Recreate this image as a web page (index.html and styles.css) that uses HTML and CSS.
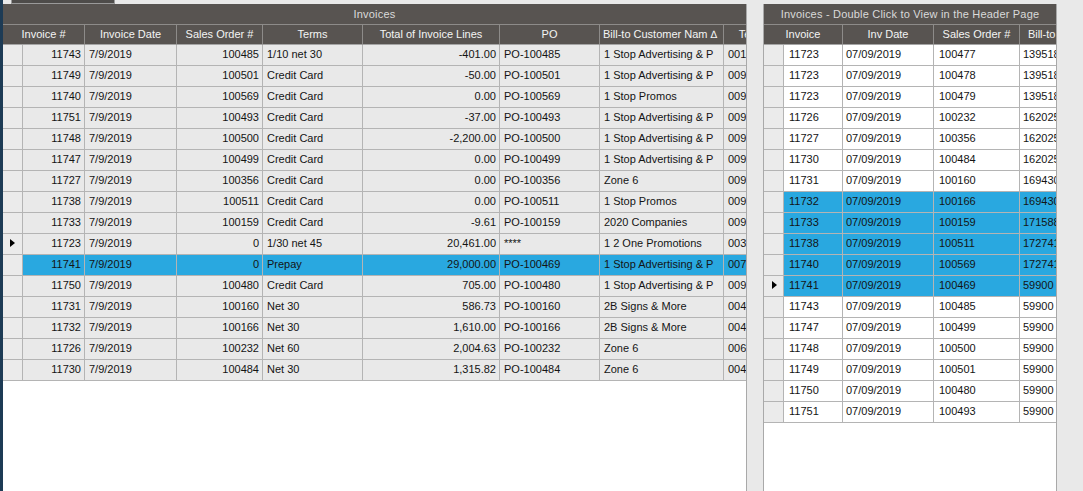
FILE: index.html
```html
<!DOCTYPE html>
<html>
<head>
<meta charset="utf-8">
<title>Invoices</title>
<link rel="stylesheet" href="styles.css">
</head>
<body>
<div class="app">
  <div class="strip"></div>
  <div class="main">
    <div class="topbar"><div class="tab"></div></div>
    <div class="panels">
      <section class="grid grid-left">
        <div class="title">Invoices</div>
        <div class="row head">
          <div class="cell span2">Invoice #</div>
          <div class="cell">Invoice Date</div>
          <div class="cell">Sales Order #</div>
          <div class="cell">Terms</div>
          <div class="cell">Total of Invoice Lines</div>
          <div class="cell">PO</div>
          <div class="cell l">Bill-to Customer Nam <span class="sort">&#8710;</span></div>
          <div class="cell">Terms Code</div>
        </div>
        <div class="row"><div class="cell ind"></div><div class="cell r">11743</div><div class="cell">7/9/2019</div><div class="cell r">100485</div><div class="cell">1/10 net 30</div><div class="cell r">-401.00</div><div class="cell">PO-100485</div><div class="cell">1 Stop Advertising &amp; P</div><div class="cell">001</div></div>
        <div class="row"><div class="cell ind"></div><div class="cell r">11749</div><div class="cell">7/9/2019</div><div class="cell r">100501</div><div class="cell">Credit Card</div><div class="cell r">-50.00</div><div class="cell">PO-100501</div><div class="cell">1 Stop Advertising &amp; P</div><div class="cell">009</div></div>
        <div class="row"><div class="cell ind"></div><div class="cell r">11740</div><div class="cell">7/9/2019</div><div class="cell r">100569</div><div class="cell">Credit Card</div><div class="cell r">0.00</div><div class="cell">PO-100569</div><div class="cell">1 Stop Promos</div><div class="cell">009</div></div>
        <div class="row"><div class="cell ind"></div><div class="cell r">11751</div><div class="cell">7/9/2019</div><div class="cell r">100493</div><div class="cell">Credit Card</div><div class="cell r">-37.00</div><div class="cell">PO-100493</div><div class="cell">1 Stop Advertising &amp; P</div><div class="cell">009</div></div>
        <div class="row"><div class="cell ind"></div><div class="cell r">11748</div><div class="cell">7/9/2019</div><div class="cell r">100500</div><div class="cell">Credit Card</div><div class="cell r">-2,200.00</div><div class="cell">PO-100500</div><div class="cell">1 Stop Advertising &amp; P</div><div class="cell">009</div></div>
        <div class="row"><div class="cell ind"></div><div class="cell r">11747</div><div class="cell">7/9/2019</div><div class="cell r">100499</div><div class="cell">Credit Card</div><div class="cell r">0.00</div><div class="cell">PO-100499</div><div class="cell">1 Stop Advertising &amp; P</div><div class="cell">009</div></div>
        <div class="row"><div class="cell ind"></div><div class="cell r">11727</div><div class="cell">7/9/2019</div><div class="cell r">100356</div><div class="cell">Credit Card</div><div class="cell r">0.00</div><div class="cell">PO-100356</div><div class="cell">Zone 6</div><div class="cell">009</div></div>
        <div class="row"><div class="cell ind"></div><div class="cell r">11738</div><div class="cell">7/9/2019</div><div class="cell r">100511</div><div class="cell">Credit Card</div><div class="cell r">0.00</div><div class="cell">PO-100511</div><div class="cell">1 Stop Promos</div><div class="cell">009</div></div>
        <div class="row"><div class="cell ind"></div><div class="cell r">11733</div><div class="cell">7/9/2019</div><div class="cell r">100159</div><div class="cell">Credit Card</div><div class="cell r">-9.61</div><div class="cell">PO-100159</div><div class="cell">2020 Companies</div><div class="cell">009</div></div>
        <div class="row"><div class="cell ind"><span class="marker"></span></div><div class="cell r">11723</div><div class="cell">7/9/2019</div><div class="cell r">0</div><div class="cell">1/30 net 45</div><div class="cell r">20,461.00</div><div class="cell">****</div><div class="cell">1 2 One Promotions</div><div class="cell">003</div></div>
        <div class="row sel"><div class="cell ind"></div><div class="cell r">11741</div><div class="cell">7/9/2019</div><div class="cell r">0</div><div class="cell">Prepay</div><div class="cell r">29,000.00</div><div class="cell">PO-100469</div><div class="cell">1 Stop Advertising &amp; P</div><div class="cell">007</div></div>
        <div class="row"><div class="cell ind"></div><div class="cell r">11750</div><div class="cell">7/9/2019</div><div class="cell r">100480</div><div class="cell">Credit Card</div><div class="cell r">705.00</div><div class="cell">PO-100480</div><div class="cell">1 Stop Advertising &amp; P</div><div class="cell">009</div></div>
        <div class="row"><div class="cell ind"></div><div class="cell r">11731</div><div class="cell">7/9/2019</div><div class="cell r">100160</div><div class="cell">Net 30</div><div class="cell r">586.73</div><div class="cell">PO-100160</div><div class="cell">2B Signs &amp; More</div><div class="cell">004</div></div>
        <div class="row"><div class="cell ind"></div><div class="cell r">11732</div><div class="cell">7/9/2019</div><div class="cell r">100166</div><div class="cell">Net 30</div><div class="cell r">1,610.00</div><div class="cell">PO-100166</div><div class="cell">2B Signs &amp; More</div><div class="cell">004</div></div>
        <div class="row"><div class="cell ind"></div><div class="cell r">11726</div><div class="cell">7/9/2019</div><div class="cell r">100232</div><div class="cell">Net 60</div><div class="cell r">2,004.63</div><div class="cell">PO-100232</div><div class="cell">Zone 6</div><div class="cell">006</div></div>
        <div class="row"><div class="cell ind"></div><div class="cell r">11730</div><div class="cell">7/9/2019</div><div class="cell r">100484</div><div class="cell">Net 30</div><div class="cell r">1,315.82</div><div class="cell">PO-100484</div><div class="cell">Zone 6</div><div class="cell">004</div></div>
      </section>
      <section class="grid grid-right">
        <div class="title">Invoices - Double Click to View in the Header Page</div>
        <div class="row head">
          <div class="cell span2">Invoice</div>
          <div class="cell">Inv Date</div>
          <div class="cell">Sales Order #</div>
          <div class="cell">Bill-to Customer</div>
        </div>
        <div class="row"><div class="cell ind"></div><div class="cell a">11723</div><div class="cell b">07/09/2019</div><div class="cell a">100477</div><div class="cell c">1395180</div></div>
        <div class="row"><div class="cell ind"></div><div class="cell a">11723</div><div class="cell b">07/09/2019</div><div class="cell a">100478</div><div class="cell c">1395180</div></div>
        <div class="row"><div class="cell ind"></div><div class="cell a">11723</div><div class="cell b">07/09/2019</div><div class="cell a">100479</div><div class="cell c">1395180</div></div>
        <div class="row"><div class="cell ind"></div><div class="cell a">11726</div><div class="cell b">07/09/2019</div><div class="cell a">100232</div><div class="cell c">1620250</div></div>
        <div class="row"><div class="cell ind"></div><div class="cell a">11727</div><div class="cell b">07/09/2019</div><div class="cell a">100356</div><div class="cell c">1620250</div></div>
        <div class="row"><div class="cell ind"></div><div class="cell a">11730</div><div class="cell b">07/09/2019</div><div class="cell a">100484</div><div class="cell c">1620250</div></div>
        <div class="row"><div class="cell ind"></div><div class="cell a">11731</div><div class="cell b">07/09/2019</div><div class="cell a">100160</div><div class="cell c">1694300</div></div>
        <div class="row sel"><div class="cell ind"></div><div class="cell a">11732</div><div class="cell b">07/09/2019</div><div class="cell a">100166</div><div class="cell c">1694300</div></div>
        <div class="row sel"><div class="cell ind"></div><div class="cell a">11733</div><div class="cell b">07/09/2019</div><div class="cell a">100159</div><div class="cell c">1715880</div></div>
        <div class="row sel"><div class="cell ind"></div><div class="cell a">11738</div><div class="cell b">07/09/2019</div><div class="cell a">100511</div><div class="cell c">1727410</div></div>
        <div class="row sel"><div class="cell ind"></div><div class="cell a">11740</div><div class="cell b">07/09/2019</div><div class="cell a">100569</div><div class="cell c">1727410</div></div>
        <div class="row sel"><div class="cell ind"><span class="marker"></span></div><div class="cell a">11741</div><div class="cell b">07/09/2019</div><div class="cell a">100469</div><div class="cell c">59900</div></div>
        <div class="row"><div class="cell ind"></div><div class="cell a">11743</div><div class="cell b">07/09/2019</div><div class="cell a">100485</div><div class="cell c">59900</div></div>
        <div class="row"><div class="cell ind"></div><div class="cell a">11747</div><div class="cell b">07/09/2019</div><div class="cell a">100499</div><div class="cell c">59900</div></div>
        <div class="row"><div class="cell ind"></div><div class="cell a">11748</div><div class="cell b">07/09/2019</div><div class="cell a">100500</div><div class="cell c">59900</div></div>
        <div class="row"><div class="cell ind"></div><div class="cell a">11749</div><div class="cell b">07/09/2019</div><div class="cell a">100501</div><div class="cell c">59900</div></div>
        <div class="row"><div class="cell ind"></div><div class="cell a">11750</div><div class="cell b">07/09/2019</div><div class="cell a">100480</div><div class="cell c">59900</div></div>
        <div class="row"><div class="cell ind"></div><div class="cell a">11751</div><div class="cell b">07/09/2019</div><div class="cell a">100493</div><div class="cell c">59900</div></div>
      </section>
    </div>
  </div>
</div>
</body>
</html>
```
FILE: styles.css
```css
* { box-sizing: border-box; }
html, body { margin: 0; padding: 0; }
body {
  background: #e9e9e9;
  font-family: "Liberation Sans", Arial, sans-serif;
  font-size: 11px;
  color: #141414;
  width: 1083px;
  height: 491px;
  overflow: hidden;
}
.app { display: flex; height: 491px; }
.strip { width: 3px; background: #1d3b55; flex: none; }
.main { flex: 1; display: flex; flex-direction: column; }
.topbar { height: 4px; flex: none; }
.tab {
  margin-left: 8px;
  width: 104px;
  height: 4px;
  background: #4e4c4a;
  border: 1px solid #9a9a9a;
  border-top: none;
}
.panels { flex: 1; display: flex; gap: 16px; }
.grid {
  background: #fff;
  overflow: hidden;
  display: flex;
  flex-direction: column;
  flex: none;
}
.grid-left {
  width: 744px;
  border-right: 1px solid #a9a9a9;
  --cols: 20px 62px 92px 86px 100px 137px 100px 124px 90px;
  --cell: #e9e9e9;
}
.grid-right {
  width: 294px;
  border-left: 1px solid #a9a9a9;
  border-right: 1px solid #a9a9a9;
  --cols: 20px 59px 91px 86px 95px;
  --cell: #ffffff;
}
.title {
  height: 21px;
  line-height: 20px;
  background: #585451;
  color: #dadada;
  text-align: center;
  border-bottom: 1px solid #8d8b89;
  letter-spacing: 0.2px;
  flex: none;
}
.row {
  display: grid;
  grid-template-columns: var(--cols);
  width: max-content;
  height: 21px;
  flex: none;
}
.cell {
  background: var(--cell);
  border-right: 1px solid #b4b4b4;
  border-bottom: 1px solid #b4b4b4;
  line-height: 18px;
  padding: 0 3px 0 4px;
  white-space: nowrap;
  overflow: hidden;
}
.cell.r { text-align: right; padding: 0 3px 0 2px; }
.cell.ind { background: #ebebeb; padding: 0; position: relative; }
.head { height: 20px; }
.head .cell {
  background: #585451;
  color: #f4f4f4;
  text-align: center;
  line-height: 19px;
  padding: 0 2px;
  border-right-color: #8d8b89;
  border-bottom-color: #a5a5a5;
}
.head .cell.span2 { grid-column: span 2; }
.head .cell.l { text-align: left; padding-left: 3px; }
.sort { font-family: "DejaVu Sans", sans-serif; font-size: 10px; }
.sel .cell { background: #29a8e0; }
.sel .cell.ind { background: #ebebeb; }
.grid-right .cell.a { padding-left: 5px; }
.grid-right .cell.b { padding-left: 3px; }
.grid-right .cell.c { padding-left: 3px; }
.marker {
  position: absolute;
  left: 7px;
  top: 5px;
  width: 0;
  height: 0;
  border-left: 5px solid #000;
  border-top: 4.5px solid transparent;
  border-bottom: 4.5px solid transparent;
}
.grid-right .marker { left: 8px; }
```
